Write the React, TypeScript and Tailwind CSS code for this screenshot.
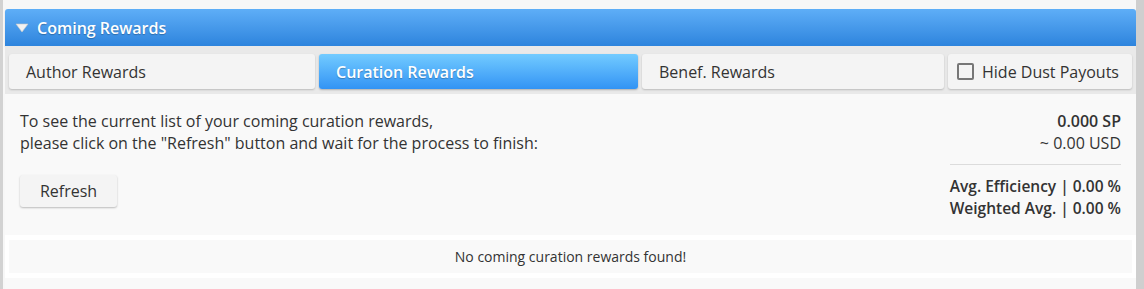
// Coming rewards panel with tab strip and empty curation list.
const font = { fontFamily: '"Open Sans", "Noto Sans", sans-serif' }

function Tab({ label, active = false }: { label: string; active?: boolean }) {
  if (active) {
    return (
      <div className="flex h-[35px] flex-1 items-center rounded-[3px] bg-gradient-to-b from-[#72cbff] to-[#3293f4] px-[17px] text-[16px] font-semibold text-white shadow-[0_1px_2px_rgba(0,0,0,0.25)] [text-shadow:0_1px_1px_rgba(0,0,0,0.25)]">
        {label}
      </div>
    )
  }
  return (
    <div className="flex h-[35px] flex-1 items-center rounded-[3px] bg-[#f4f4f4] px-[17px] text-[16px] text-[#333] shadow-[0_1px_2px_rgba(0,0,0,0.2)]">
      {label}
    </div>
  )
}

export default function App() {
  return (
    <div className="flex h-[289px] w-[1144px] overflow-hidden bg-[#f7f7f7]" style={font}>
      <div className="w-[3px] shrink-0 bg-[#d2d2d2]" />
      <div className="flex min-w-0 flex-1 flex-col pl-[2px] pt-[9px]">
        <div className="flex h-[37px] shrink-0 items-center gap-[8px] rounded-t-[3px] bg-gradient-to-b from-[#5eaef7] to-[#2d84dd] pl-[10px] text-[16px] font-semibold text-white shadow-[0_1px_1px_rgba(0,0,0,0.3)] [text-shadow:0_1px_1px_rgba(0,0,0,0.25)]">
          <svg width="14" height="10" viewBox="0 0 14 10" className="mt-[1px]">
            <path d="M1 1 L13 1 L7 9 Z" fill="#f2f2f2" stroke="#c8c8c8" strokeWidth="0.6" />
          </svg>
          Coming Rewards
        </div>
        <div className="flex shrink-0 gap-[4px] bg-[#e9e9e9] px-[4px] pb-[5px] pt-[8px]">
          <div className="flex w-[306px]"><Tab label="Author Rewards" /></div>
          <div className="flex w-[319px]"><Tab label="Curation Rewards" active /></div>
          <div className="flex w-[302px]"><Tab label="Benef. Rewards" /></div>
          <div className="flex h-[35px] flex-1 items-center gap-[8px] whitespace-nowrap rounded-[3px] bg-[#f4f4f4] pl-[9px] text-[16px] text-[#333] shadow-[0_1px_2px_rgba(0,0,0,0.2)]">
            <span className="h-[17px] w-[17px] shrink-0 rounded-[2px] border-2 border-[#777] bg-[#f4f4f4]" />
            Hide Dust Payouts
          </div>
        </div>
        <div className="flex flex-1 flex-col bg-[#f9f9f9]">
          <div className="flex shrink-0 justify-between px-[15px] pt-[16px] text-[16px] leading-[22px] text-[#333]">
            <div className="flex flex-col items-start">
              <div>To see the current list of your coming curation rewards,</div>
              <div>please click on the "Refresh" button and wait for the process to finish:</div>
              <button className="mt-[21px] h-[32px] w-[97px] rounded-[3px] bg-[#f4f4f4] text-[16px] text-[#333] shadow-[0_1px_2px_rgba(0,0,0,0.25)]">
                Refresh
              </button>
            </div>
            <div className="flex w-[171px] shrink-0 flex-col items-end whitespace-nowrap">
              <div className="font-semibold">0.000 SP</div>
              <div>~ 0.00 USD</div>
              <div className="my-[10px] h-px w-full bg-[#dcdcdc]" />
              <div className="text-[15.5px] font-semibold">Avg. Efficiency | 0.00 %</div>
              <div className="text-[15.5px] font-semibold">Weighted Avg. | 0.00 %</div>
            </div>
          </div>
          <div className="mt-[16px] shrink-0 bg-white px-[4px] py-[5px]">
            <div className="flex h-[33px] items-center justify-center bg-[#f9f9f9] text-[14px] text-[#333]">
              No coming curation rewards found!
            </div>
          </div>
        </div>
      </div>
      <div className="w-[8px] shrink-0 bg-[#cfcfcf]" />
    </div>
  )
}
